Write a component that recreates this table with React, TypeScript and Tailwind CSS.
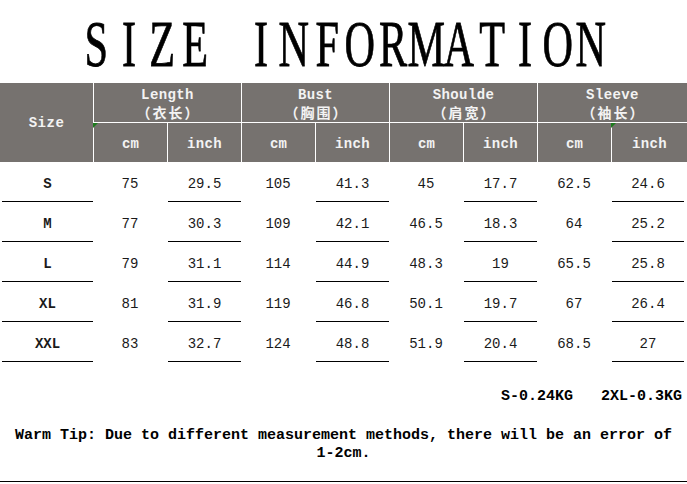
import React from "react";
import clsx from "clsx";

const title = "SIZE INFORMATION";

const groups = [
  { en: "Length", cn: "（衣长）" },
  { en: "Bust", cn: "（胸围）" },
  { en: "Shoulde", cn: "（肩宽）" },
  { en: "Sleeve", cn: "（袖长）" },
];

const rows = [
  ["S", "75", "29.5", "105", "41.3", "45", "17.7", "62.5", "24.6"],
  ["M", "77", "30.3", "109", "42.1", "46.5", "18.3", "64", "25.2"],
  ["L", "79", "31.1", "114", "44.9", "48.3", "19", "65.5", "25.8"],
  ["XL", "81", "31.9", "119", "46.8", "50.1", "19.7", "67", "26.4"],
  ["XXL", "83", "32.7", "124", "48.8", "51.9", "20.4", "68.5", "27"],
];

const Flag = () => (
  <span className="absolute top-0 -left-px w-0 h-0 border-t-[5px] border-t-[#1d7a1d] border-r-[5px] border-r-transparent" />
);

const App = () => {
  return (
    <div className="w-[687px] h-[484px] bg-white overflow-hidden font-['Liberation_Mono',monospace] text-black">
      {/* title */}
      <div className="h-[83px] pt-[11px] flex justify-center font-['Liberation_Serif',serif] text-[66px] leading-[66px]">
        {title.split("").map((ch, i) => (
          <div key={i} className="w-[33px] flex justify-center">
            <span className="scale-x-[0.64] [-webkit-text-stroke:0.8px_black]">{ch === " " ? "\u00a0" : ch}</span>
          </div>
        ))}
      </div>

      {/* header */}
      <div className="flex h-[79px] bg-[#76726f] text-[#f3f3f3] font-bold text-[14px]">
        <div className="w-[93px] flex items-center justify-center pt-[2px] tracking-[0.5px]">Size</div>
        {groups.map((g, i) => (
          <div key={g.en} className={clsx("flex flex-col border-l border-white", i === 3 ? "flex-1" : "w-[148px]")}>
            <div className="h-[40px] flex flex-col items-center justify-center border-b border-white leading-[17px] pt-[2px]">
              <span className="tracking-[0.4px]">{g.en}</span>
              <span className="font-['Noto_Sans_CJK_SC',sans-serif] text-[14px] font-bold tracking-[2px] pl-[2px]">{g.cn}</span>
            </div>
            <div className="flex flex-1">
              <div className="relative w-[73px] flex items-center justify-center pt-[3px]">
                {i === 0 && <Flag />}
                cm
              </div>
              <div className="relative flex-1 flex items-center justify-center border-l border-white pt-[3px] tracking-[0.4px]">
                {i === 3 && <Flag />}
                inch
              </div>
            </div>
          </div>
        ))}
      </div>

      {/* body */}
      <div className="text-[14px] text-[#1a1a1a]">
        {rows.map((r) => (
          <div key={r[0]} className="flex h-[40px]">
            {r.map((v, j) => {
              const lined = j === 0 || j % 2 === 0;
              return (
                <div
                  key={j}
                  className={clsx(
                    "h-full flex",
                    j === 0 ? "w-[93px] pl-[2px]" : j === 8 ? "flex-1" : "w-[74px]",
                    j > 0 && j % 2 === 0 && "pl-[1px]",
                    j === 8 && "pr-[3px]"
                  )}
                >
                  <div
                    className={clsx(
                      "flex-1 flex items-center justify-center pt-[5px] border-b",
                      lined ? "border-black" : "border-transparent",
                      j === 0 && "font-bold"
                    )}
                  >
                    {v}
                  </div>
                </div>
              );
            })}
          </div>
        ))}
      </div>

      {/* weights */}
      <div className="mt-[27px] h-[15px] leading-[15px] flex justify-end pr-[5px] font-bold text-[15px]">
        <span>S-0.24KG</span>
        <span className="ml-[28px]">2XL-0.3KG</span>
      </div>

      {/* tip */}
      <p className="mt-[23px] text-center font-bold text-[15px] leading-[18px]">
        Warm Tip: Due to different measurement methods, there will be an error of{" "}
        <span className="whitespace-nowrap">1-2cm.</span>
      </p>

      <div className="mt-[18px] h-px bg-black w-full" />
    </div>
  );
};

export default App;
